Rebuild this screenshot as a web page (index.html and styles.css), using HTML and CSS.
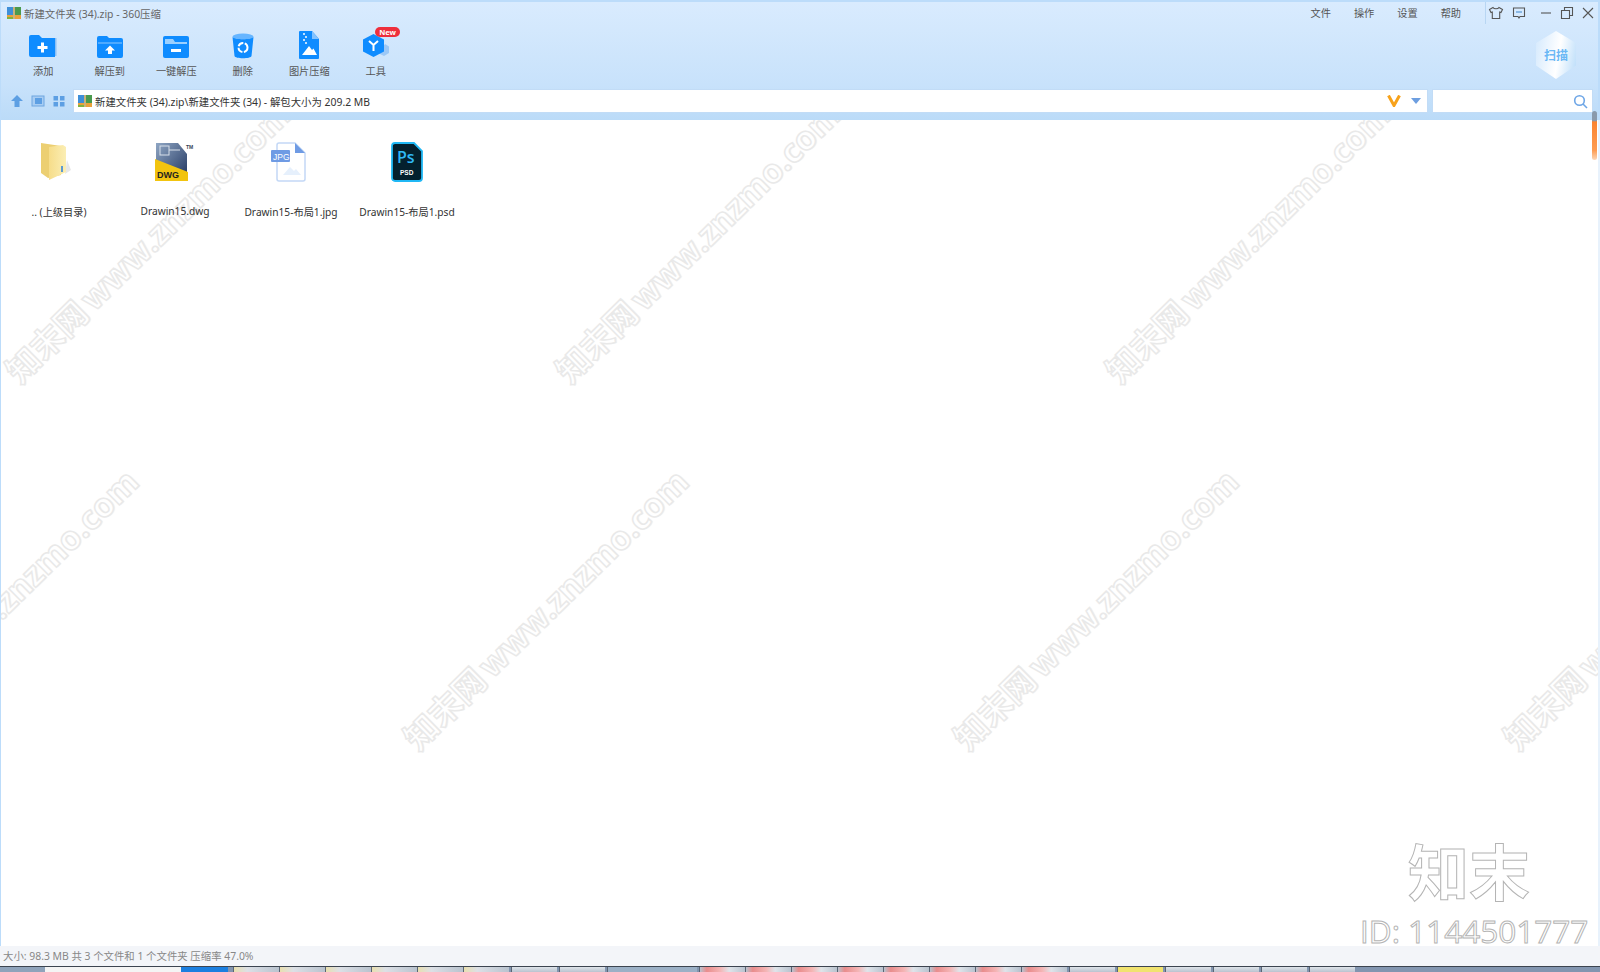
FILE: index.html
```html
<!DOCTYPE html>
<html lang="zh-CN">

<head>
    <meta charset="UTF-8">
    <title>新建文件夹 (34).zip - 360压缩</title>
    <link rel="stylesheet" href="styles.css">
</head>

<body>
    <div class="window">
        <header class="header">
            <div class="titlebar">
                <svg class="zip-icon" width="14" height="14" viewBox="0 0 14 14">
                    <rect x="0" y="1" width="6" height="12" fill="#3f8fd8" />
                    <rect x="8" y="1" width="6" height="12" fill="#4a9a4e" />
                    <rect x="0" y="9" width="14" height="4" fill="#e9a13b" />
                    <rect x="6" y="1" width="2" height="12" fill="#c9b27a" />
                    <rect x="0" y="11" width="6" height="2" fill="#7fb23f" />
                </svg>
                <span class="title">新建文件夹 (34).zip - 360压缩</span>
                <nav class="menu">
                    <span>文件</span>
                    <span>操作</span>
                    <span>设置</span>
                    <span>帮助</span>
                </nav>
                <div class="win-btns">
                    <svg width="16" height="16" viewBox="0 0 16 16" fill="none" stroke="#555" stroke-width="1.1">
                        <path d="M5 2.5 1.5 4.5 3 7.5 4.3 7V13.5H11.7V7L13 7.5 14.5 4.5 11 2.5C10 4.2 6 4.2 5 2.5Z" />
                    </svg>
                    <svg width="16" height="16" viewBox="0 0 16 16" fill="none" stroke="#555" stroke-width="1.1">
                        <path d="M2.5 3H13.5V11.5H9L8 13 7 11.5H2.5Z" />
                        <path d="M5 7H11" stroke="#4a8fd0" />
                    </svg>
                    <svg class="gap" width="14" height="14" viewBox="0 0 14 14" fill="none" stroke="#555" stroke-width="1.1">
                        <path d="M2 7H12" />
                    </svg>
                    <svg width="14" height="14" viewBox="0 0 14 14" fill="none" stroke="#555" stroke-width="1.1">
                        <path d="M1.5 4.5H9.5V12.5H1.5Z" />
                        <path d="M4.5 4.5V1.5H12.5V9.5H9.5" />
                    </svg>
                    <svg width="14" height="14" viewBox="0 0 14 14" fill="none" stroke="#555" stroke-width="1.1">
                        <path d="M2 2 12 12M12 2 2 12" />
                    </svg>
                </div>
            </div>

            <div class="toolbar">
                <div class="tool">
                    <svg width="28" height="24" viewBox="0 0 28 24">
                        <path d="M25 3H27.5V21H25Z" fill="#8cc0f5" />
                        <path d="M2 0H10L13 3H26V22H2A2 2 0 0 1 0 20V2A2 2 0 0 1 2 0Z" fill="#0f8cff" />
                        <path d="M12 7.500H15V11H18.500V14H15V17.500H12V14H8.500V11H12Z" fill="#fff" />
                    </svg>
                    <span>添加</span>
                </div>
                <div class="tool">
                    <svg width="26" height="24" viewBox="0 0 26 24">
                        <path d="M2 1H10L12 3H24A2 2 0 0 1 26 5V21A2 2 0 0 1 24 23H2A2 2 0 0 1 0 21V3A2 2 0 0 1 2 1Z" fill="#0f8cff" />
                        <path d="M1 8H25" stroke="#8cc8ff" stroke-width="1" />
                        <path d="M13 10.500 18 15.500H15V19H11V15.500H8Z" fill="#fff" />
                    </svg>
                    <span>解压到</span>
                </div>
                <div class="tool">
                    <svg width="26" height="24" viewBox="0 0 26 24">
                        <path d="M2 1H24A2 2 0 0 1 26 3V21A2 2 0 0 1 24 23H2A2 2 0 0 1 0 21V3A2 2 0 0 1 2 1Z" fill="#0f8cff" />
                        <path d="M2 4H10L12 7H24V9H2Z" fill="#9bd0ff" />
                        <rect x="8" y="14" width="10" height="3" fill="#fff" />
                    </svg>
                    <span>一键解压</span>
                </div>
                <div class="tool">
                    <svg width="22" height="26" viewBox="0 0 22 26">
                        <ellipse cx="11" cy="3.500" rx="10.500" ry="3" fill="#66b5ff" />
                        <path d="M0.500 4C3 7 19 7 21.500 4L19.500 23C19 26 3 26 2.500 23Z" fill="#0f8cff" />
                        <circle cx="11" cy="14.500" r="4.500" fill="none" stroke="#fff" stroke-width="2" stroke-dasharray="6 1.500" />
                    </svg>
                    <span>删除</span>
                </div>
                <div class="tool">
                    <svg width="20" height="28" viewBox="0 0 20 28">
                        <path d="M1 0H13L20 8V27A1 1 0 0 1 19 28H1A1 1 0 0 1 0 27V1A1 1 0 0 1 1 0Z" fill="#0f8cff" />
                        <path d="M13 0 20 8H13Z" fill="#82c2ff" />
                        <path d="M3 24 10 15 13 19 14.500 17.500 18 24Z" fill="#fff" />
                        <path d="M4 2H6V4H4ZM6 5H8V7H6ZM4 8H6V10H4ZM6 11H8V13H6Z" fill="#bfe0ff" />
                    </svg>
                    <span>图片压缩</span>
                </div>
                <div class="tool">
                    <svg width="26" height="26" viewBox="0 0 26 26">
                        <path d="M22 11 26 13.500V20L21 23 15 20Z" fill="#9cc8f6" />
                        <path d="M10.500 1 21 6.500V18.500L10.500 24 0 18.500V6.500Z" fill="#0f8cff" />
                        <path d="M6 8 10.500 12 15 8M10.500 12V18" fill="none" stroke="#fff" stroke-width="2" />
                    </svg>
                    <span>工具</span>
                    <b class="new-badge">New</b>
                </div>
                <div class="scan">扫描</div>
            </div>

            <div class="addr-row">
                <svg width="14" height="14" viewBox="0 0 14 14">
                    <path d="M7 1 13 7H9.500V13H4.500V7H1Z" fill="#5d9fe3" />
                </svg>
                <svg width="14" height="14" viewBox="0 0 14 14">
                    <rect x="1" y="2" width="12" height="10" fill="#a8cdf3" stroke="#6ea6e0" />
                    <rect x="4" y="4" width="7" height="6" fill="#5d9fe3" />
                </svg>
                <svg width="14" height="14" viewBox="0 0 14 14" fill="#5d9fe3">
                    <rect x="1.500" y="2" width="4.500" height="4.500" />
                    <rect x="8" y="2" width="4.500" height="4.500" />
                    <rect x="1.500" y="8" width="4.500" height="4.500" />
                    <rect x="8" y="8" width="4.500" height="4.500" />
                </svg>
                <div class="addr-box">
                    <svg class="zip-icon" width="14" height="14" viewBox="0 0 14 14">
                        <rect x="0" y="1" width="6" height="12" fill="#3f8fd8" />
                        <rect x="8" y="1" width="6" height="12" fill="#4a9a4e" />
                        <rect x="0" y="9" width="14" height="4" fill="#e9a13b" />
                        <rect x="6" y="1" width="2" height="12" fill="#c9b27a" />
                        <rect x="0" y="11" width="6" height="2" fill="#7fb23f" />
                    </svg>
                    <span class="addr-text">新建文件夹 (34).zip\新建文件夹 (34) - 解包大小为 209.2 MB</span>
                    <svg class="vip" width="14" height="12" viewBox="0 0 14 12">
                        <path d="M1.500 0.500 7 10.500 12.500 0.500" fill="none" stroke="#f7a21b" stroke-width="3" />
                    </svg>
                    <svg class="caret" width="10" height="6" viewBox="0 0 10 6">
                        <path d="M0 0H10L5 6Z" fill="#6d9ee0" />
                    </svg>
                </div>
                <div class="search-box">
                    <svg width="15" height="15" viewBox="0 0 15 15" fill="none" stroke="#6ea6e6" stroke-width="1.600">
                        <circle cx="6.500" cy="6.500" r="4.800" />
                        <path d="M10 10 14 14" />
                    </svg>
                </div>
            </div>
        </header>

        <main class="files">
            <div class="marks">
                <span class="mark m1">知末网 www.znzmo.com</span>
                <span class="mark m2">知末网 www.znzmo.com</span>
                <span class="mark m3">知末网 www.znzmo.com</span>
                <span class="mark m4">知末网 www.znzmo.com</span>
                <span class="mark m5">知末网 www.znzmo.com</span>
                <span class="mark m6">知末网 www.znzmo.com</span>
                <span class="mark m7">知末网 www.znzmo.com</span>
                <div class="brand">知末</div>
                <div class="brand-id">ID: 1144501777</div>
            </div>

            <div class="file-list">
                <div class="file">
                    <svg class="folder-icon" width="32" height="40" viewBox="0 0 32 40">
                        <defs>
                            <linearGradient id="fold" x1="0" y1="0" x2="1" y2="0">
                                <stop offset="0" stop-color="#f6dd8a" />
                                <stop offset="1" stop-color="#fbeeb4" />
                            </linearGradient>
                        </defs>
                        <path d="M28 18 32 28 26 32Z" fill="#e8e8e8" />
                        <path d="M2 1 22 4V33L9 36 2 31Z" fill="#eccf72" />
                        <path d="M10 5 24 3 27 5V30L10 38Z" fill="url(#fold)" />
                        <rect x="22" y="24" width="2" height="6" fill="#5e9ad0" />
                    </svg>
                    <span>.. (上级目录)</span>
                </div>
                <div class="file">
                    <svg width="42" height="40" viewBox="0 0 42 40">
                        <defs>
                            <linearGradient id="dwg" x1="0" y1="0" x2="1" y2="1">
                                <stop offset="0" stop-color="#8fa6c4" />
                                <stop offset="1" stop-color="#21365f" />
                            </linearGradient>
                        </defs>
                        <path d="M2 1H24L33 12V36H2Z" fill="url(#dwg)" />
                        <rect x="6" y="4" width="9" height="9" fill="none" stroke="#d8e0ea" />
                        <path d="M15 8H26" stroke="#d8e0ea" />
                        <path d="M1 17 34 30V39H1Z" fill="#f2c40f" />
                        <text x="3" y="36" class="dwg-label">DWG</text>
                        <text x="32" y="7" class="tm-label">TM</text>
                    </svg>
                    <span>Drawin15.dwg</span>
                </div>
                <div class="file">
                    <svg class="jpg-icon" width="36" height="40" viewBox="0 0 36 40">
                        <path d="M9 1H25L35 11V37A2 2 0 0 1 33 39H9A2 2 0 0 1 7 37V3A2 2 0 0 1 9 1Z" fill="#fff" stroke="#c3d8f6" stroke-width="1.500" />
                        <path d="M25 1 35 11H25Z" fill="#6f9be4" />
                        <rect x="1" y="8" width="19" height="12" rx="1" fill="#6f9be4" />
                        <text x="3" y="18" class="jpg-label">JPG</text>
                        <path d="M13 33 20 25 24 29 26 27 31 33Z" fill="#e6f0fc" />
                    </svg>
                    <span>Drawin15-布局1.jpg</span>
                </div>
                <div class="file">
                    <svg width="32" height="40" viewBox="0 0 32 40">
                        <path d="M4 1H23L31 9V36A3 3 0 0 1 28 39H4A3 3 0 0 1 1 36V4A3 3 0 0 1 4 1Z" fill="#04202e" stroke="#20b8f5" stroke-width="1.800" />
                        <text x="6" y="21" class="ps-label">Ps</text>
                        <text x="9" y="33" class="psd-label">PSD</text>
                    </svg>
                    <span>Drawin15-布局1.psd</span>
                </div>
            </div>
        </main>

        <div class="scroll-thumb"></div>

        <footer class="status">大小: 98.3 MB 共 3 个文件和 1 个文件夹 压缩率 47.0%</footer>

        <div class="taskbar">
            <span class="task start"></span>
            <span class="task search"></span>
            <span class="task blue"></span>
            <span class="task-group">
                <span class="task tab folder"></span>
                <span class="task tab folder"></span>
                <span class="task tab folder"></span>
                <span class="task tab folder"></span>
                <span class="task tab folder"></span>
                <span class="task tab folder"></span>
            </span>
            <span class="task tab"></span>
            <span class="task tab"></span>
            <span class="task tab wide"></span>
            <span class="task-group">
                <span class="task tab red"></span>
                <span class="task tab red"></span>
                <span class="task tab red"></span>
                <span class="task tab red"></span>
                <span class="task tab red"></span>
                <span class="task tab red"></span>
                <span class="task tab red"></span>
                <span class="task tab red"></span>
            </span>
            <span class="task tab"></span>
            <span class="task tab yellow"></span>
            <span class="task tab"></span>
            <span class="task tab"></span>
            <span class="task tab"></span>
            <span class="task tab"></span>
            <span class="task rest"></span>
        </div>
    </div>
</body>

</html>
```
FILE: styles.css
```css
* {
    box-sizing: border-box;
}

html,
body {
    margin: 0;
    height: 100%;
    overflow: hidden;
}

body {
    font-family: "Noto Sans", "Noto Sans CJK SC", sans-serif;
    font-size: 10.200px;
    color: #333;
    background: #fff;
}

.window {
    position: relative;
    display: flex;
    flex-direction: column;
    height: 972px;
}

/* header */
.header {
    height: 120px;
    flex: none;
    background: linear-gradient(#d9ebfe, #c8e2fb 70%, #bbdbf8);
    border: 2px solid #bcdcfa;
    border-bottom: none;
    border-left-width: 1px;
}

.titlebar {
    display: flex;
    align-items: center;
    height: 26px;
    padding-left: 6px;
    padding-bottom: 4px;
}

.zip-icon {
    flex: none;
}

.title {
    margin-left: 3px;
    color: #666;
    font-size: 10.400px;
}

.menu {
    display: flex;
    gap: 23px;
    margin-left: auto;
    margin-right: 24px;
    margin-bottom: 2px;
    color: #555;
}

.win-btns {
    display: flex;
    align-items: center;
    gap: 7px;
    padding-left: 2px;
    padding-right: 3px;
    border-left: 1px solid #b8d6f3;
    height: 22px;
}

.win-btns .gap {
    margin-left: 5px;
}

.toolbar {
    display: flex;
    align-items: flex-start;
    height: 61px;
    padding-left: 9px;
}

.tool {
    position: relative;
    display: flex;
    flex-direction: column;
    align-items: center;
    justify-content: flex-end;
    width: 66.500px;
    height: 50px;
    gap: 4px;
    color: #555;
}

.new-badge {
    position: absolute;
    top: -1px;
    right: 9px;
    padding: 0 4px;
    height: 10px;
    line-height: 10px;
    border-radius: 5px;
    background: #ee2f3c;
    color: #fff;
    font-size: 7.500px;
    font-weight: 700;
}

.scan {
    display: flex;
    align-items: center;
    justify-content: center;
    width: 40px;
    height: 48px;
    margin-left: auto;
    margin-right: 22px;
    margin-top: 3px;
    clip-path: polygon(50% 0, 100% 25%, 100% 72%, 50% 100%, 0 72%, 0 25%);
    background: linear-gradient(100deg, #d4e9fd, #fff 55%, #b9dcfa);
    color: #6bb8f5;
    font-size: 12px;
    font-weight: 700;
}

.addr-row {
    display: flex;
    align-items: center;
    gap: 7px;
    height: 24px;
    padding-left: 9px;
}

.addr-box {
    display: flex;
    align-items: center;
    flex: 1;
    height: 24px;
    padding-left: 4px;
    background: #fff;
    border: 1px solid #c2dcf6;
}

.addr-text {
    margin-left: 3px;
    color: #333;
    font-size: 10.400px;
}

.vip {
    margin-left: auto;
}

.caret {
    margin: 0 6px 0 10px;
}

.search-box {
    display: flex;
    align-items: center;
    justify-content: flex-end;
    flex: none;
    width: 161px;
    height: 24px;
    margin-left: -3px;
    margin-right: 5px;
    padding-right: 4px;
    background: #fff;
    border: 1px solid #c2dcf6;
}

/* file area */
.files {
    position: relative;
    flex: 1;
    overflow: hidden;
    border-left: 1px solid #bcdcfa;
    border-right: 2px solid #e8f2fc;
}

.file-list {
    position: relative;
    display: flex;
    padding-top: 22px;
}

.file {
    display: flex;
    flex-direction: column;
    align-items: center;
    width: 116px;
    gap: 22px;
    color: #333;
    white-space: nowrap;
}

.file svg {
    display: block;
}

.file .folder-icon {
    margin-left: -8px;
}

.file .jpg-icon {
    margin-left: -6px;
}

.dwg-label {
    font: 700 9px "Liberation Sans", sans-serif;
    fill: #222;
}

.tm-label {
    font: 700 5px "Liberation Sans", sans-serif;
    fill: #345;
}

.jpg-label {
    font: 8.500px "Liberation Sans", sans-serif;
    fill: #fff;
}

.ps-label {
    font: 600 16px "Open Sans", sans-serif;
    fill: #2fb9f7;
}

.psd-label {
    font: 700 6.500px "Liberation Sans", sans-serif;
    fill: #fff;
}

.scroll-thumb {
    position: absolute;
    top: 111px;
    right: 3px;
    width: 5px;
    height: 49px;
    border-radius: 3px;
    background: linear-gradient(#8a99aa 0, #8a99aa 20%, #fb8430 22%, #fd9c52 80%, #fcd8b8);
}

/* watermarks */
.marks {
    position: absolute;
    inset: 0;
}

.mark {
    position: absolute;
    font-family: "Noto Sans", "Noto Sans CJK SC", sans-serif;
    font-size: 33px;
    font-weight: 700;
    word-spacing: -4px;
    line-height: 1;
    white-space: nowrap;
    color: #fff;
    -webkit-text-stroke: 1.500px #e9e9e9;
    text-shadow: 1px 1px 1px #efefef;
    transform-origin: left bottom;
    transform: rotate(-44.500deg);
}

.m1 { left: 22px; top: 235px; }
.m2 { left: 572px; top: 235px; }
.m3 { left: 1122px; top: 235px; }
.m4 { left: -130px; top: 602px; }
.m5 { left: 420px; top: 602px; }
.m6 { left: 970px; top: 602px; }
.m7 { left: 1520px; top: 602px; }

.brand,
.brand-id {
    position: absolute;
    color: #fff;
    -webkit-text-stroke: 1px #b4b4b4;
    white-space: nowrap;
    line-height: 1;
}

.brand {
    left: 1407px;
    top: 722px;
    font-size: 61px;
    font-weight: 700;
}

.brand-id {
    left: 1359px;
    top: 795px;
    font-size: 31.500px;
    font-family: "Open Sans", sans-serif;
}

/* status */
.status {
    flex: none;
    height: 20px;
    line-height: 20px;
    padding-left: 3px;
    background: #f3f5f9;
    color: #888;
    font-size: 10.400px;
}

/* taskbar, cut off by the bottom of the screenshot */
.taskbar {
    display: flex;
    flex: none;
    gap: 2px;
    height: 6px;
    background: #8295b0;
    border-top: 1px solid #3c4450;
}

.task {
    display: block;
    height: 100%;
}

.task-group {
    display: flex;
}

.start {
    width: 45px;
    background: #8fa3bb;
    margin-right: -2px;
}

.search {
    width: 136px;
    background: #f4f4f4;
    margin-right: -2px;
}

.blue {
    width: 47px;
    background: #1b7fe0;
    margin-right: 3px;
}

.tab {
    width: 46px;
    background: linear-gradient(#dfe4ea, #b9c3cf);
    border-left: 1px solid #5a6574;
}

.wide {
    width: 90px;
    background: #9bb0c6;
}

.folder {
    background: linear-gradient(90deg, #e9dfb0 0, #dce0e6 30%, #b9c3cf);
}

.red {
    background: linear-gradient(90deg, #b9c3cf 0, #e98c8c 15%, #f4b5b5 45%, #dfe4ea 65%, #b9c3cf);
}

.yellow {
    background: #f1e36f;
}

.rest {
    flex: 1;
}
```
